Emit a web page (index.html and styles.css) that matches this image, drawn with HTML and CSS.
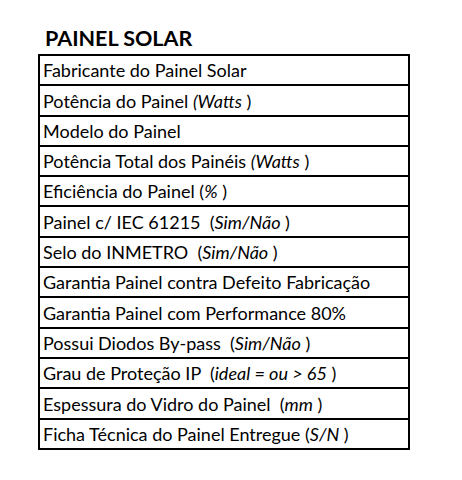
FILE: index.html
```html
<!DOCTYPE html>
<html lang="pt">
<head>
<meta charset="utf-8">
<link rel="stylesheet" href="styles.css">
</head>
<body>
<div class="page">
  <h1 class="title">PAINEL SOLAR</h1>
  <div class="table">
    <div class="row">Fabricante do Painel Solar</div>
    <div class="row">Potência do Painel <i>(Watts</i> )</div>
    <div class="row">Modelo do Painel</div>
    <div class="row">Potência Total dos Painéis <i>(Watts</i> )</div>
    <div class="row">Eficiência do Painel (<i>%</i> )</div>
    <div class="row">Painel c/ IEC 61215  (<i>Sim/Não</i> )</div>
    <div class="row">Selo do INMETRO  (<i>Sim/Não</i> )</div>
    <div class="row">Garantia Painel contra Defeito Fabricação</div>
    <div class="row">Garantia Painel com Performance 80%</div>
    <div class="row">Possui Diodos By-pass  (<i>Sim/Não</i> )</div>
    <div class="row">Grau de Proteção IP  (<i>ideal = ou &gt; 65</i> )</div>
    <div class="row">Espessura do Vidro do Painel  (<i>mm</i> )</div>
    <div class="row">Ficha Técnica do Painel Entregue (<i>S/N</i> )</div>
  </div>
</div>
</body>
</html>
```

FILE: styles.css
```css
html, body {
  margin: 0;
  padding: 0;
  background: #ffffff;
}
.page {
  padding: 26px 0 0 38px;
  font-family: Lato, "Open Sans", sans-serif;
  color: #000;
}
.title {
  margin: 0 0 4px 7px;
  font-size: 21.5px;
  font-weight: 700;
  line-height: 24px;
  letter-spacing: 0;
}
.table {
  width: 368px;
  border: 2px solid #000;
  border-bottom: 0;
}
.row {
  border-bottom: 2px solid #000;
  display: flex;
  align-items: flex-end;
  padding: 0 0 3px 3px;
  box-sizing: content-box;
  height: 25.3px;
  font-size: 18px;
  line-height: 22px;
  white-space: pre;
}
.row i {
  font-style: italic;
}
```
